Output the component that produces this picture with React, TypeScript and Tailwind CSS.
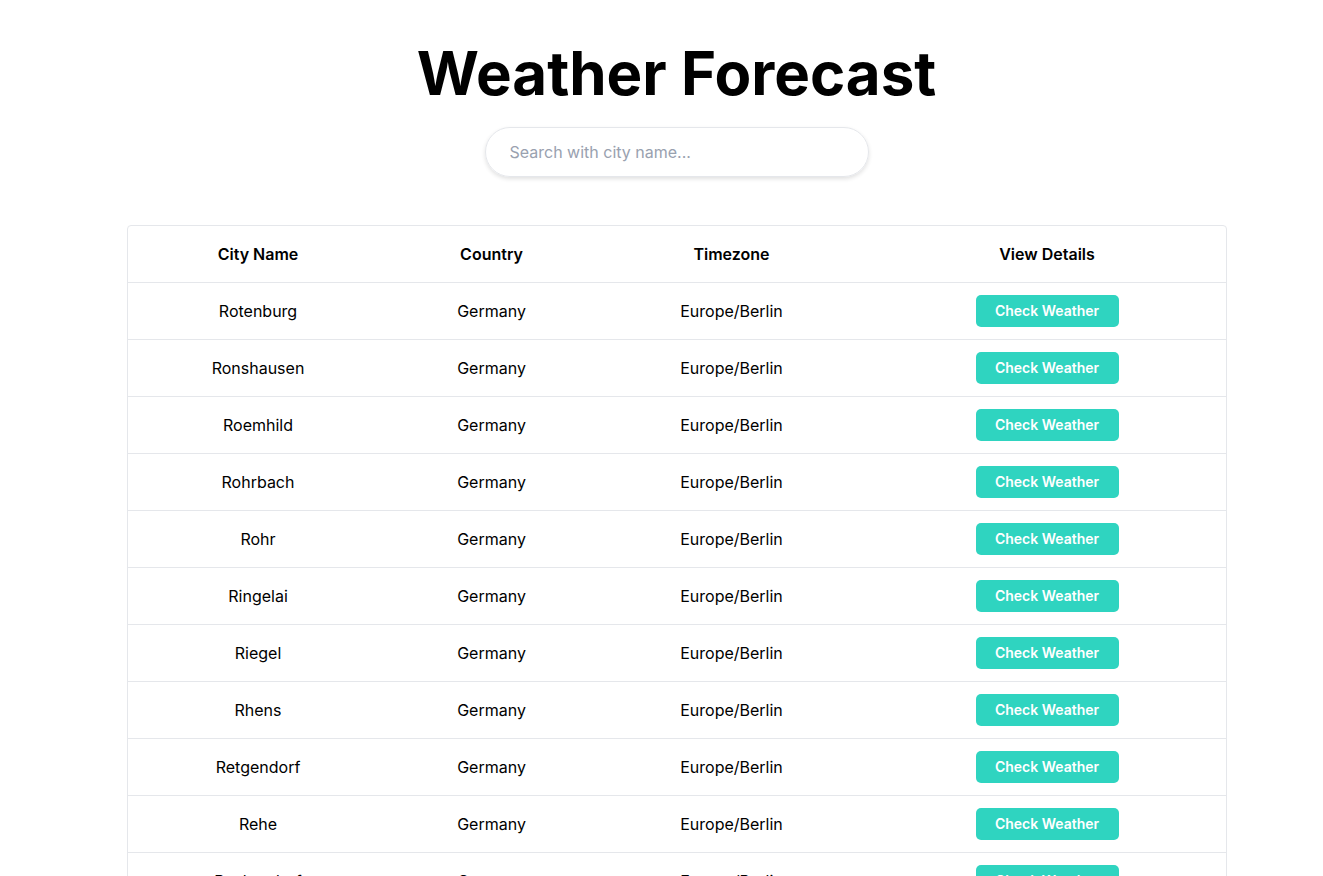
import { useState } from "react";

const cities = [
  "Rotenburg",
  "Ronshausen",
  "Roemhild",
  "Rohrbach",
  "Rohr",
  "Ringelai",
  "Riegel",
  "Rhens",
  "Retgendorf",
  "Rehe",
  "Reckendorf",
  "Rechtsupweg",
];

export default function App() {
  const [query, setQuery] = useState("");
  const rows = cities.filter((c) => c.toLowerCase().includes(query.toLowerCase()));

  return (
    <main
      className="h-screen overflow-hidden bg-white text-black pl-[30px]"
      style={{ fontFamily: "Inter, 'Noto Sans', sans-serif" }}
    >
      <div className="flex flex-col items-center pt-[36px]">
        <h1 className="text-[60px] leading-[74px] font-bold">Weather Forecast</h1>
        <input
          value={query}
          onChange={(e) => setQuery(e.target.value)}
          placeholder="Search with city name..."
          className="mt-[17px] w-[384px] h-[50px] rounded-full border border-gray-200 px-6 text-base shadow-[0_2px_4px_rgba(0,0,0,0.12)] outline-none placeholder:text-gray-400"
        />
      </div>

      <div className="mx-auto mt-[48px] w-[1100px] border border-gray-200 rounded-[4px]">
        <table className="w-full border-collapse text-base">
          <thead>
            <tr className="h-[56px]">
              <th className="w-[261px] font-semibold">City Name</th>
              <th className="w-[206px] font-semibold">Country</th>
              <th className="w-[274px] font-semibold">Timezone</th>
              <th className="font-semibold">View Details</th>
            </tr>
          </thead>
          <tbody>
            {rows.map((city) => (
              <tr key={city} className="h-[57px] border-t border-gray-200 text-center">
                <td>{city}</td>
                <td>Germany</td>
                <td>Europe/Berlin</td>
                <td>
                  <button className="w-[143px] h-[32px] rounded-[5px] bg-[#2fd4c0] text-white text-sm font-semibold">
                    Check Weather
                  </button>
                </td>
              </tr>
            ))}
          </tbody>
        </table>
      </div>
    </main>
  );
}
